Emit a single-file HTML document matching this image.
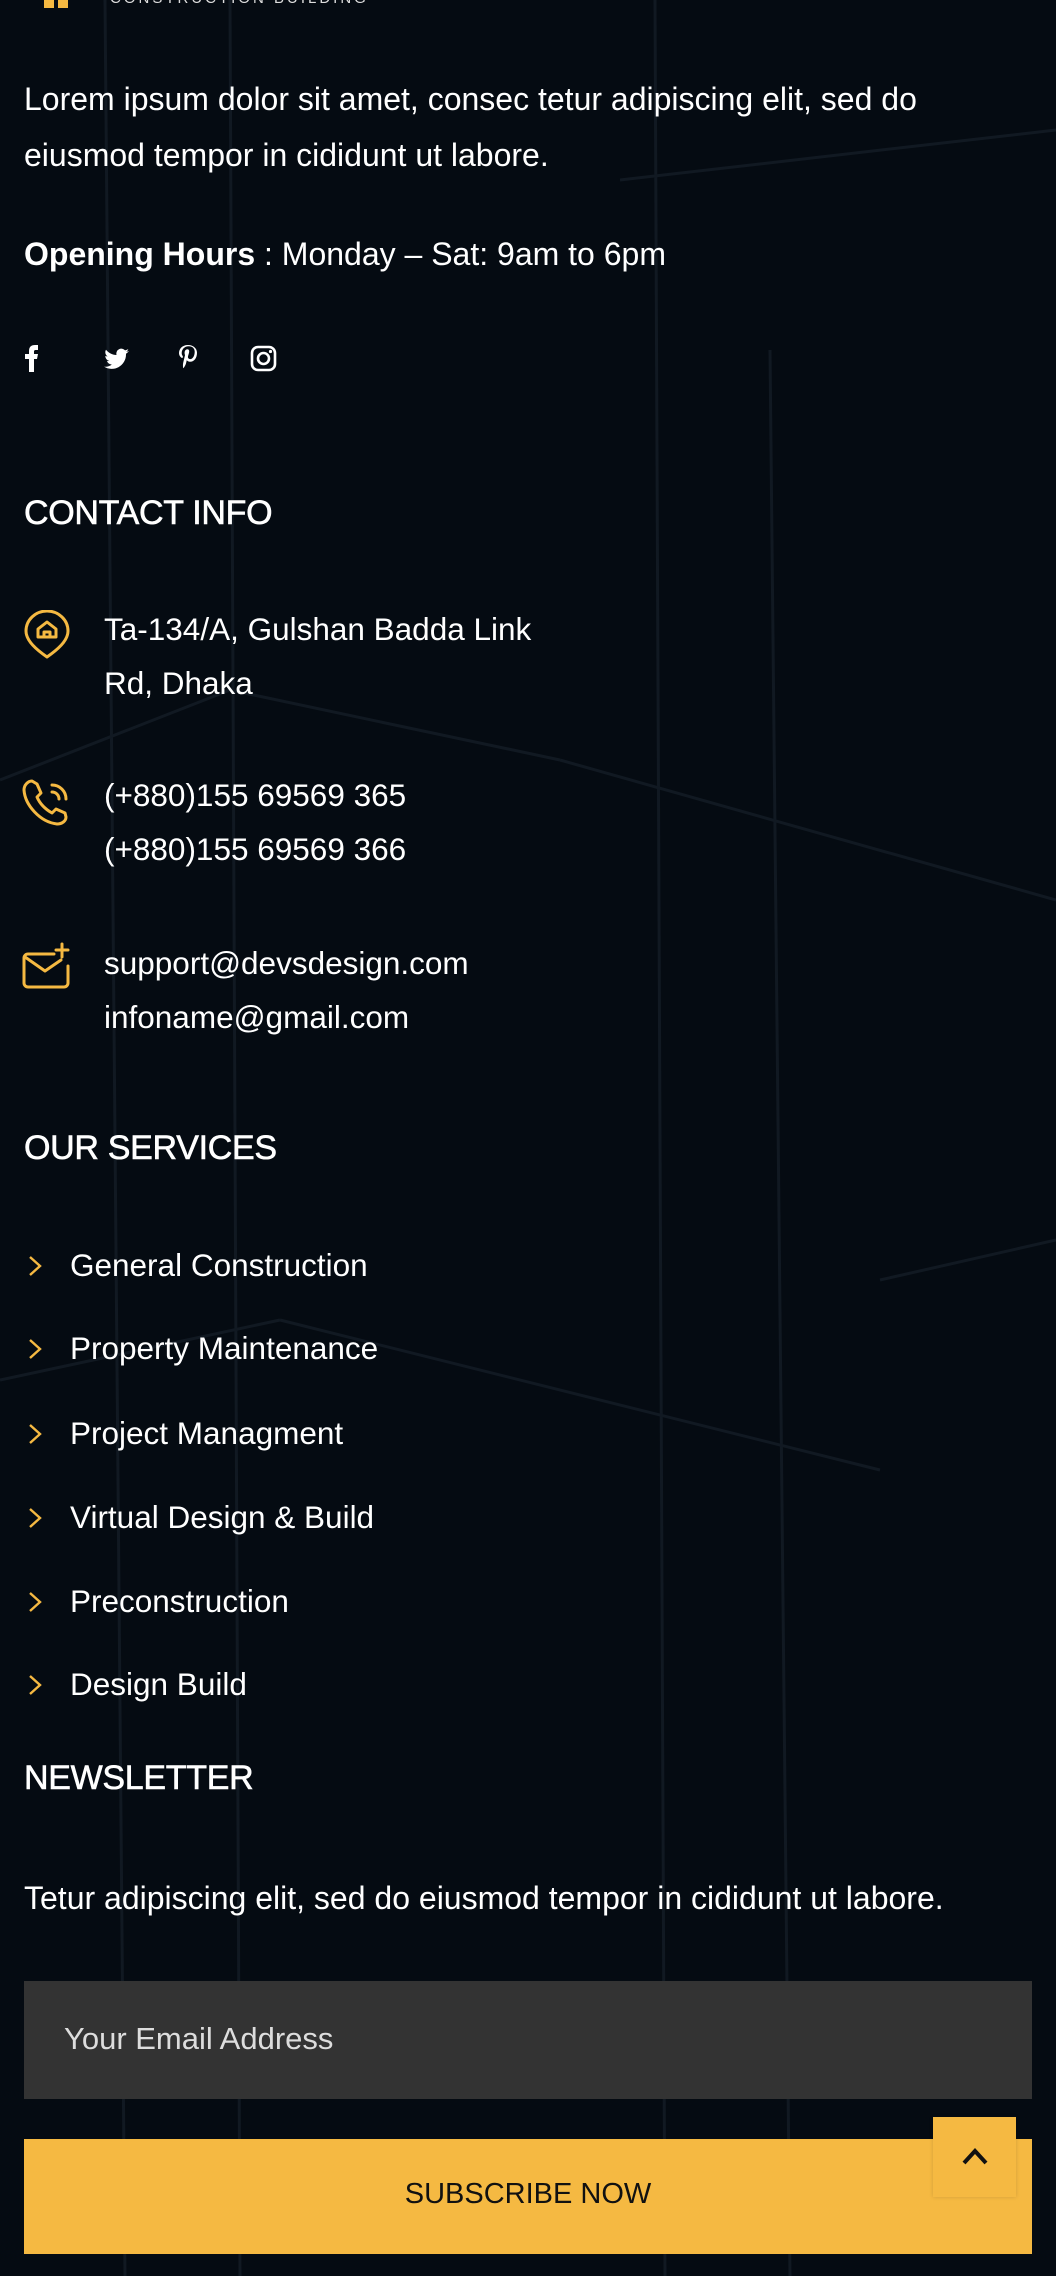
<!DOCTYPE html>
<html><head><meta charset="utf-8">
<style>
*{margin:0;padding:0;box-sizing:border-box}
html,body{width:1056px;height:2276px;overflow:hidden}
body{background:#050b12;font-family:"Liberation Sans",Arial,sans-serif;color:#fff;position:relative}
.a{position:absolute;white-space:nowrap}
.p{font-size:32px;line-height:56px}
.h{font-size:34px;font-weight:400;letter-spacing:-0.3px;-webkit-text-stroke:0.6px #fff}
.c{font-size:31.5px;line-height:54px;left:104px}
.s{font-size:31.5px;left:70px}
.chev{position:absolute;left:28px;width:16px;height:22px}
</style></head><body>
<svg class="a" style="left:0;top:0" width="1056" height="2276">
<g stroke="#111922" stroke-width="3" fill="none">
<line x1="105" y1="0" x2="125" y2="2276"/>
<line x1="230" y1="0" x2="240" y2="2276"/>
<line x1="655" y1="0" x2="665" y2="2276"/>
<line x1="770" y1="350" x2="790" y2="2276"/>
<line x1="0" y1="780" x2="230" y2="690"/>
<line x1="230" y1="690" x2="560" y2="760"/>
<line x1="560" y1="760" x2="1056" y2="900"/>
<line x1="0" y1="1380" x2="280" y2="1320"/>
<line x1="280" y1="1320" x2="880" y2="1470"/>
<line x1="880" y1="1280" x2="1056" y2="1240"/>
<line x1="620" y1="180" x2="1056" y2="130"/>
</g></svg>
<div class="a" style="left:44px;top:-12px;width:10px;height:20px;background:#f5b942"></div>
<div class="a" style="left:58px;top:-12px;width:10px;height:20px;background:#f5b942"></div>
<div class="a" style="left:110px;top:-10px;font-size:15px;letter-spacing:3px;color:#ddd">CONSTRUCTION BUILDING</div>

<div class="a p" style="left:24px;top:71px">Lorem ipsum dolor sit amet, consec tetur adipiscing elit, sed do<br>eiusmod tempor in cididunt ut labore.</div>
<div class="a p" style="left:24px;top:226px"><b>Opening Hours</b> : Monday – Sat: 9am to 6pm</div>

<svg class="a" style="left:20px;top:344px" width="270" height="30" fill="#fff">
<path d="M9 28V15H5v-5h4V7c0-4 2-6 6-6h3v5h-2c-2 0-2 1-2 2v2h4l-1 5h-3v13z"/>
<path d="M109 7c-1 .5-2 .7-3 .8 1-.6 2-1.6 2.3-2.7-1 .6-2 1-3.2 1.3a5 5 0 0 0-8.6 4.6c-4.2-.2-8-2.2-10.5-5.3-1.4 2.4-.6 5.4 1.6 6.8-.8 0-1.6-.3-2.3-.6 0 2.4 1.7 4.5 4 5-.7.2-1.5.2-2.3.1.7 2 2.6 3.5 4.8 3.5A10 10 0 0 1 84 22.6 14.3 14.3 0 0 0 106 10.5V9.8c1-.7 2-1.6 3-2.8z"/>
<path d="M168 1c-6 0-9 4-9 8 0 2 1 4 3 5 .3 0 .5 0 .6-.3l.3-1c0-.3 0-.4-.2-.7-.6-.7-1-1.6-1-3 0-3.6 2.7-6.8 7-6.8 3.8 0 6 2.3 6 5.4 0 4-1.8 7.5-4.5 7.5-1.5 0-2.6-1.2-2.2-2.7.4-1.8 1.2-3.7 1.2-5 0-1.2-.6-2.1-1.9-2.1-1.5 0-2.700 1.5-2.7 3.6 0 1.3.4 2.2.4 2.2l-1.8 7.6c-.5 2.2-.1 5 0 5.300 0 .2.2.2.3.1.1-.2 1.8-2.3 2.4-4.4l.9-3.6c.5.9 1.8 1.7 3.2 1.7 4.2 0 7-3.8 7-9C177 4.6 173.5 1 168 1z"/>
<g fill="none" stroke="#fff" stroke-width="2.6"><rect x="232" y="3" width="23" height="23" rx="6"/><circle cx="243.5" cy="14.5" r="5.5"/></g><circle cx="250.5" cy="7.5" r="1.6"/>
</svg>

<div class="a h" style="left:24px;top:494px">CONTACT INFO</div>

<svg class="a" style="left:24px;top:610px" width="48" height="50" fill="none" stroke="#f5b942" stroke-width="3" stroke-linejoin="round" stroke-linecap="round">
<path d="M23 47C13 40 2 31 2 21a21 20 0 0 1 42 0c0 10-11 19-21 26z"/>
<path d="M14 27v-8l9-7 9 7v8z"/><path d="M20 27v-5h6v5"/>
</svg>
<div class="a c" style="top:602px">Ta-134/A, Gulshan Badda Link<br>Rd, Dhaka</div>

<svg class="a" style="left:22px;top:778px" width="50" height="50" fill="none" stroke="#f5b942" stroke-width="3" stroke-linecap="round" stroke-linejoin="round">
<path d="M10 3c-4 0-8 4-8 9 1 15 16 32 33 34 5 0 9-3 9-7l-1-4-9-4-4 4c-7-4-12-9-15-16l4-4-4-9z"/>
<path d="M30 7a14 14 0 0 1 14 14"/><path d="M30 14a7 7 0 0 1 7 7"/>
</svg>
<div class="a c" style="top:768px">(+880)155 69569 365<br>(+880)155 69569 366</div>

<svg class="a" style="left:22px;top:942px" width="50" height="50" fill="none" stroke="#f5b942" stroke-width="3" stroke-linecap="round" stroke-linejoin="round">
<path d="M32 12H6a4 4 0 0 0-4 4v25a4 4 0 0 0 4 4h36a4 4 0 0 0 4-4V24"/>
<path d="M3 15l20 14 16-11"/><path d="M40 2v13M34 8h12"/>
</svg>
<div class="a c" style="top:936px">support@devsdesign.com<br>infoname@gmail.com</div>

<div class="a h" style="left:24px;top:1129px">OUR SERVICES</div>

<svg class="chev" style="top:1255px" viewBox="0 0 16 22" fill="none" stroke="#f5b942" stroke-width="2.4"><path d="M2 2l10 9-10 9"/></svg>
<div class="a s" style="top:1247px">General Construction</div>
<svg class="chev" style="top:1338px" viewBox="0 0 16 22" fill="none" stroke="#f5b942" stroke-width="2.4"><path d="M2 2l10 9-10 9"/></svg>
<div class="a s" style="top:1330px">Property Maintenance</div>
<svg class="chev" style="top:1423px" viewBox="0 0 16 22" fill="none" stroke="#f5b942" stroke-width="2.4"><path d="M2 2l10 9-10 9"/></svg>
<div class="a s" style="top:1415px">Project Managment</div>
<svg class="chev" style="top:1507px" viewBox="0 0 16 22" fill="none" stroke="#f5b942" stroke-width="2.4"><path d="M2 2l10 9-10 9"/></svg>
<div class="a s" style="top:1499px">Virtual Design &amp; Build</div>
<svg class="chev" style="top:1591px" viewBox="0 0 16 22" fill="none" stroke="#f5b942" stroke-width="2.4"><path d="M2 2l10 9-10 9"/></svg>
<div class="a s" style="top:1583px">Preconstruction</div>
<svg class="chev" style="top:1674px" viewBox="0 0 16 22" fill="none" stroke="#f5b942" stroke-width="2.4"><path d="M2 2l10 9-10 9"/></svg>
<div class="a s" style="top:1666px">Design Build</div>

<div class="a h" style="left:24px;top:1759px">NEWSLETTER</div>
<div class="a p" style="left:24px;top:1870px">Tetur adipiscing elit, sed do eiusmod tempor in cididunt ut labore.</div>

<div class="a" style="left:24px;top:1981px;width:1008px;height:118px;background:#333"></div>
<div class="a" style="left:64px;top:2021px;font-size:31px;color:#ddd">Your Email Address</div>

<div class="a" style="left:24px;top:2139px;width:1008px;height:115px;background:#f5b942"></div>
<div class="a" style="left:0;width:1056px;text-align:center;top:2178px;font-size:29px;color:#111">SUBSCRIBE NOW</div>

<div class="a" style="left:933px;top:2117px;width:83px;height:80px;background:#f5b942;box-shadow:0 0 4px rgba(0,0,0,.15)"></div>
<svg class="a" style="left:960px;top:2146px" width="30" height="20" fill="none" stroke="#111" stroke-width="4"><path d="M4 17l11-12 11 12"/></svg>
</body></html>
